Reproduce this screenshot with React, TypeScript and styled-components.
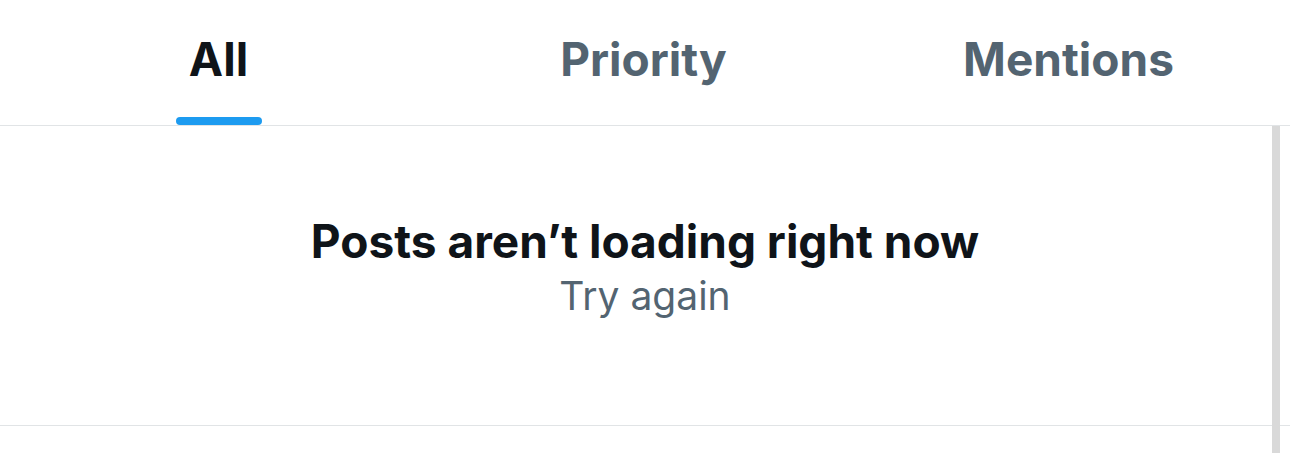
import React from "react";
import styled, { createGlobalStyle } from "styled-components";

const Global = createGlobalStyle`
  html, body { margin: 0; padding: 0; background: #ffffff; }
  body { font-family: Inter, "Noto Sans", sans-serif; }
  #root { width: 1290px; height: 453px; overflow: hidden; }
`;

const Page = styled.div`
  width: 1290px;
  height: 453px;
  display: flex;
  flex-direction: column;
  background: #fff;
`;

const TabBar = styled.nav`
  display: flex;
  height: 126px;
  padding: 0 9px 0 6px;
  border-bottom: 1px solid #e1e4e6;
  box-sizing: border-box;
`;

const Tab = styled.div`
  flex: 1;
  display: flex;
  flex-direction: column;
  align-items: center;
`;

const TabInner = styled.div`
  display: flex;
  flex-direction: column;
  align-items: center;
  height: 100%;
`;

const TabLabel = styled.span<{ $active?: boolean }>`
  font-family: Inter, sans-serif;
  font-weight: 700;
  font-size: 46px;
  line-height: 56px;
  padding-top: 31px;
  color: ${(p) => (p.$active ? "#0f1419" : "#536471")};
`;

const Indicator = styled.div`
  margin-top: auto;
  width: 86px;
  height: 8px;
  border-radius: 4px;
  background: #1d9bf0;
`;

const Body = styled.div`
  position: relative;
  flex: 1;
`;

const Message = styled.section`
  height: 300px;
  border-bottom: 1px solid #e1e4e6;
  box-sizing: border-box;
  display: flex;
  flex-direction: column;
  align-items: center;
  padding-top: 87px;
`;

const Title = styled.h2`
  margin: 0;
  font-family: Inter, sans-serif;
  font-weight: 700;
  font-size: 46px;
  line-height: 56px;
  color: #0f1419;
`;

const Retry = styled.button`
  border: 0;
  background: none;
  padding: 0;
  margin-top: 4px;
  font-family: Inter, sans-serif;
  font-weight: 400;
  font-size: 39px;
  line-height: 46px;
  color: #536471;
  cursor: pointer;
`;

const ScrollThumb = styled.div`
  position: absolute;
  top: 0;
  bottom: 0;
  right: 10px;
  width: 8px;
  background: #d9d9d9;
`;

const tabs = ["All", "Priority", "Mentions"];

export default function App() {
  return (
    <Page>
      <Global />
      <TabBar>
        {tabs.map((t, i) => (
          <Tab key={t}>
            <TabInner>
              <TabLabel $active={i === 0}>{t}</TabLabel>
              {i === 0 && <Indicator />}
            </TabInner>
          </Tab>
        ))}
      </TabBar>
      <Body>
        <Message>
          <Title>Posts aren’t loading right now</Title>
          <Retry>Try again</Retry>
        </Message>
        <ScrollThumb />
      </Body>
    </Page>
  );
}
